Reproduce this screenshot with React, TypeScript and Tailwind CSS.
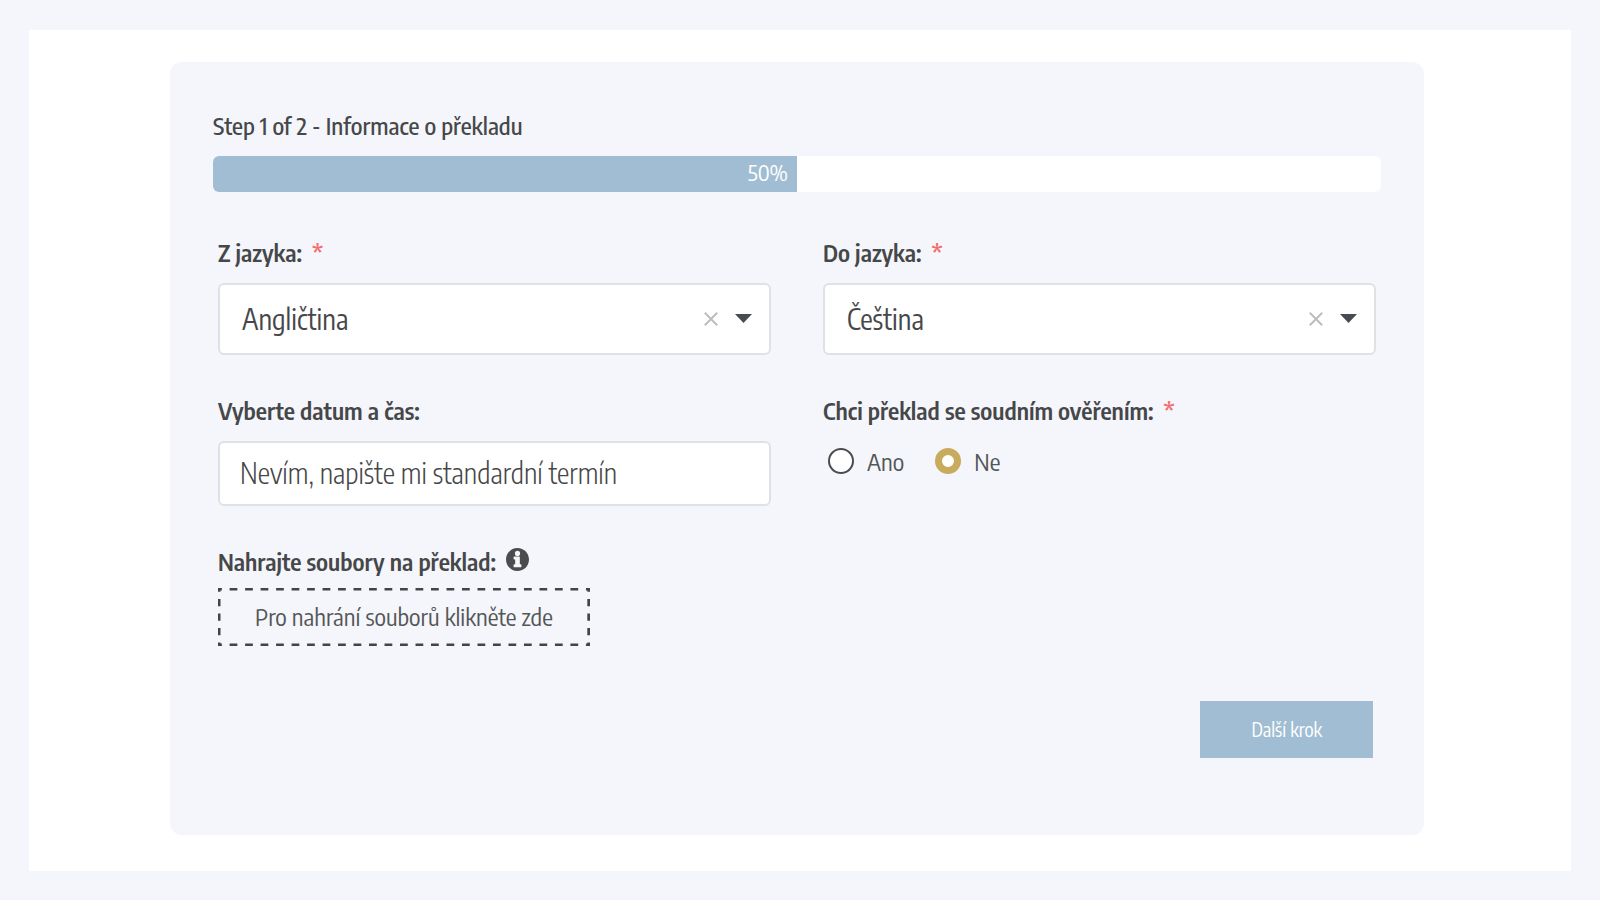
import { useState } from 'react';
import type { ReactNode } from 'react';

const LANGUAGES = ['Angličtina', 'Čeština', 'Němčina', 'Francouzština', 'Španělština'];

function Required() {
  return <span className="ml-[10px] font-semibold text-[#f2706f]">*</span>;
}

function LanguageSelect({ id, label, initial }: { id: string; label: string; initial: string }) {
  const [value, setValue] = useState(initial);

  return (
    <div>
      <label htmlFor={id} className="block text-2xl font-semibold">
        {label}
        <Required />
      </label>
      <div className="relative mt-[15px]">
        <select
          id={id}
          value={value}
          onChange={(e) => setValue(e.target.value)}
          className="block h-[72px] w-full appearance-none rounded-md border-2 border-[#e0e1e4] bg-white pr-20 pl-[22px] text-[28px]"
        >
          <option value=""></option>
          {LANGUAGES.map((lang) => (
            <option key={lang} value={lang}>{lang}</option>
          ))}
        </select>
        {/* Clear button sits over the select, left of the arrow */}
        <button
          type="button"
          aria-label="Vymazat"
          onClick={() => setValue('')}
          className="absolute top-[29px] right-[53px]"
        >
          <svg width="14" height="14" viewBox="0 0 14 14" fill="none" stroke="#bdbdbd" strokeWidth="2">
            <path d="M0.8 0.8L13.2 13.2M13.2 0.8L0.8 13.2" />
          </svg>
        </button>
        <svg
          className="pointer-events-none absolute top-[31px] right-[19px]"
          width="17"
          height="9"
          viewBox="0 0 17 9"
          fill="#474b52"
        >
          <path d="M0 0H17L8.5 9Z" />
        </svg>
      </div>
    </div>
  );
}

function Radio({ value, checked, onChange, children }: {
  value: string;
  checked: boolean;
  onChange: (value: string) => void;
  children: ReactNode;
}) {
  return (
    <label className="flex items-center gap-[13px] text-2xl text-[#555658]">
      <input
        type="radio"
        name="verified"
        value={value}
        checked={checked}
        onChange={() => onChange(value)}
        className="h-[26px] w-[26px] appearance-none rounded-full border-2 border-[#4b4c4e] bg-white checked:border-[7px] checked:border-[#c9ab5d]"
      />
      {children}
    </label>
  );
}

// Widely spaced dashes, which border-dashed cannot give
function DashedFrame() {
  return (
    <svg className="pointer-events-none absolute inset-0 h-full w-full" fill="none" stroke="#434446" strokeWidth="5" strokeDasharray="1 1" strokeDashoffset="0.5">
      <line x1="0" y1="0" x2="100%" y2="0" pathLength="48" />
      <line x1="0" y1="100%" x2="100%" y2="100%" pathLength="48" />
      <line x1="0" y1="0" x2="0" y2="100%" pathLength="8" />
      <line x1="100%" y1="0" x2="100%" y2="100%" pathLength="8" />
    </svg>
  );
}

function App() {
  const [verified, setVerified] = useState('ne');
  const progress = 50;

  return (
    <div className="min-h-screen bg-[#f4f6fb] px-[29px] py-[30px] font-['Encode_Sans_Condensed','Liberation_Sans_Narrow','Open_Sans',sans-serif] text-[#464749]">
      <main className="bg-white pt-8 pr-[147px] pb-9 pl-[141px]">
        <form className="rounded-xl bg-[#f4f6fb] px-[43px] pt-[47px] pb-[77px]" onSubmit={(e) => e.preventDefault()}>
          <h1 className="text-2xl font-medium">Step 1 of 2 - Informace o překladu</h1>

          <div className="mt-[15px] h-9 overflow-hidden rounded-md bg-white">
            <div
              className="flex h-full items-center justify-end bg-[#a1bdd3] pr-[9px] pb-[3px] text-[22px] text-white"
              style={{ width: `${progress}%` }}
            >
              {progress}%
            </div>
          </div>

          <div className="mt-11 grid grid-cols-2 gap-x-[52px] gap-y-[39px] px-[5px]">
            <LanguageSelect id="from" label="Z jazyka:" initial="Angličtina" />
            <LanguageSelect id="to" label="Do jazyka:" initial="Čeština" />

            <div>
              <label htmlFor="date" className="block text-2xl font-semibold">Vyberte datum a čas:</label>
              <input
                id="date"
                type="text"
                defaultValue="Nevím, napište mi standardní termín"
                className="mt-[15px] block h-[65px] w-full rounded-md border-2 border-[#e0e1e4] bg-white px-5 pb-[3px] text-[28px] font-light text-[#464749]"
              />
            </div>

            <fieldset>
              <legend className="text-2xl font-semibold">
                Chci překlad se soudním ověřením:
                <Required />
              </legend>
              <div className="mt-[19px] flex gap-[31px] pl-[5px]">
                <Radio value="ano" checked={verified === 'ano'} onChange={setVerified}>Ano</Radio>
                <Radio value="ne" checked={verified === 'ne'} onChange={setVerified}>Ne</Radio>
              </div>
            </fieldset>

            <div>
              <div className="flex items-center gap-[10px]">
                <span id="files" className="text-2xl font-semibold">Nahrajte soubory na překlad:</span>
                <svg className="mb-1" width="23" height="23" viewBox="8 8 496 496" fill="#4b4c4e">
                  <path d="M256 8C119 8 8 119 8 256s111 248 248 248 248-111 248-248S393 8 256 8zm0 60a56 56 0 1 1 0 112 56 56 0 0 1 0-112zm84 342a14 14 0 0 1-14 14H186a14 14 0 0 1-14-14v-38a14 14 0 0 1 14-14h20V254h-20a14 14 0 0 1-14-14v-34a14 14 0 0 1 14-14h106a14 14 0 0 1 14 14v152h20a14 14 0 0 1 14 14z" />
                </svg>
              </div>
              <button
                type="button"
                aria-describedby="files"
                className="relative mt-[11px] h-[58px] px-[37px] pb-[3px] text-2xl text-[#555658]"
              >
                <DashedFrame />
                Pro nahrání souborů klikněte zde
              </button>
            </div>
          </div>

          <div className="mt-[55px] flex justify-end pr-2">
            <button type="submit" className="h-[57px] bg-[#a1bdd3] px-[51px] text-[19px] text-white">
              Další krok
            </button>
          </div>
        </form>
      </main>
    </div>
  );
}

export default App;
